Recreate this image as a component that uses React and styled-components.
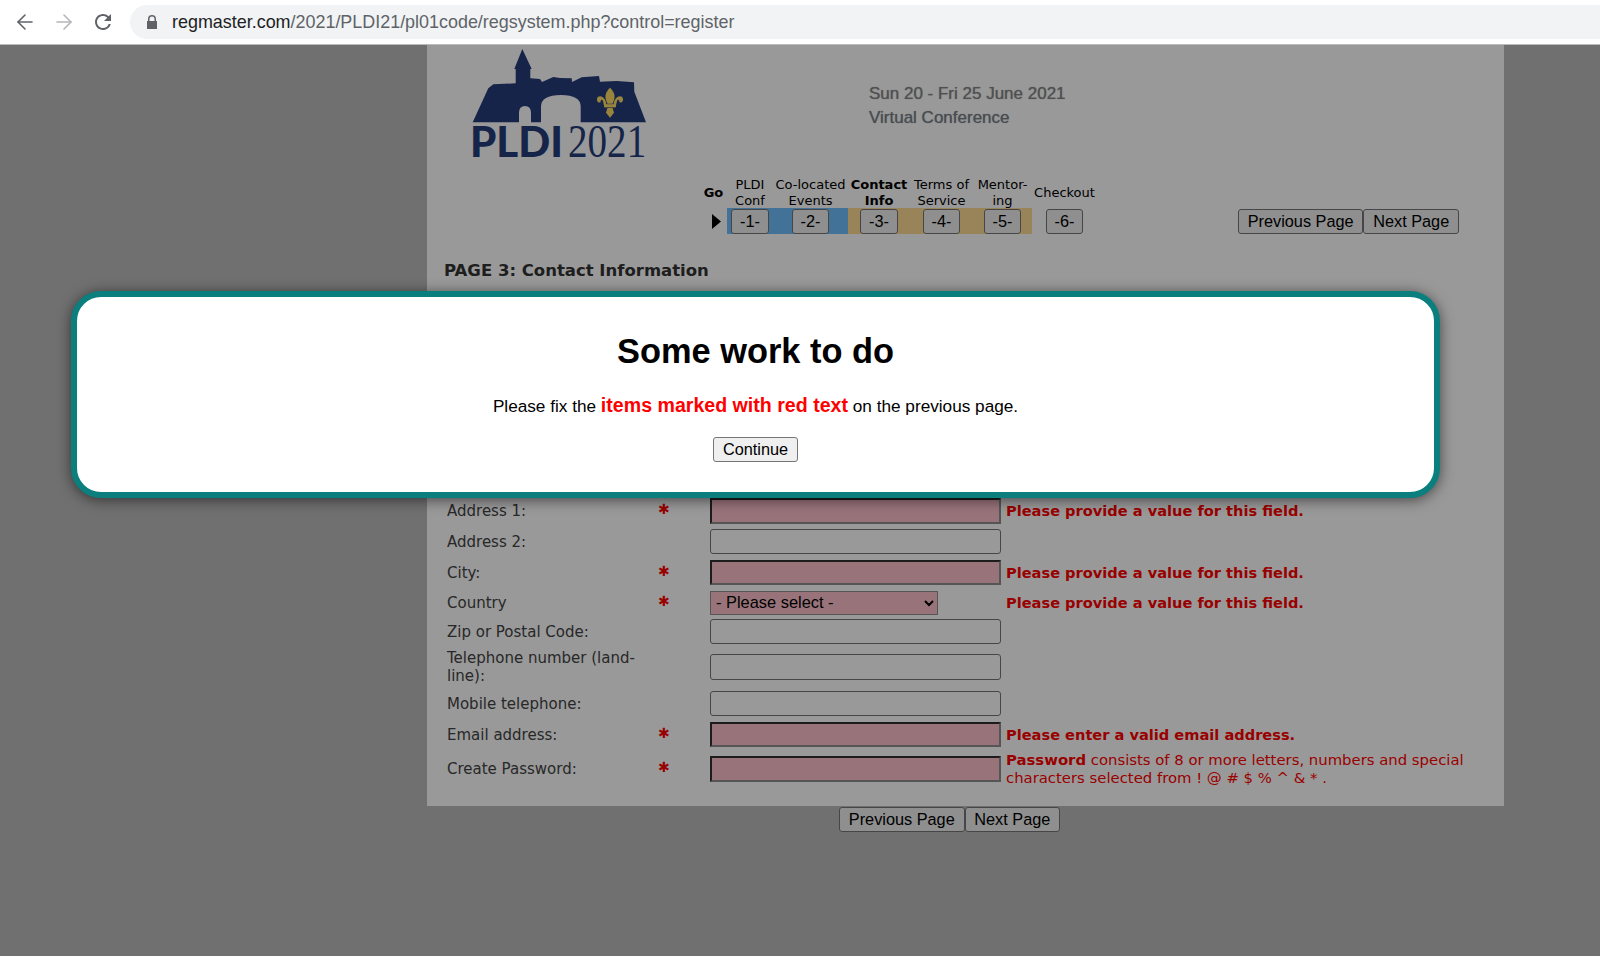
import React from 'react';
import styled, { createGlobalStyle } from 'styled-components';
import { ArrowLeft, ArrowRight } from 'lucide-react';

const GlobalStyle = createGlobalStyle`
  html, body {
    margin: 0;
    padding: 0;
    height: 100%;
    overflow: hidden;
    background: #bbbbbb;
  }
`;

const Browser = styled.div`
  display: flex;
  align-items: center;
  box-sizing: border-box;
  height: 45px;
  padding-bottom: 1px;
  background: #fff;
  border-bottom: 1px solid #bcbcbc;
  font-family: 'Liberation Sans', Arial, sans-serif;
`;

const NavIcon = styled.span`
  display: flex;
  align-items: center;
  justify-content: center;
  width: 24px;
  margin-left: ${(p) => p.$left}px;
  color: ${(p) => (p.$off ? '#b4b6b9' : '#5f6368')};
`;

const ReloadIcon = styled.svg`
  width: 24px;
  height: 24px;
  fill: currentColor;
`;

const UrlBar = styled.div`
  flex: 1;
  display: flex;
  align-items: center;
  height: 34px;
  margin-left: 15px;
  margin-right: -40px;
  padding-left: 16px;
  border-radius: 17px;
  background: #f1f3f4;
  font-size: 17.93px;
  color: #5f6368;
`;

const UrlText = styled.span`
  margin-top: 2px;
`;

const Host = styled.span`
  color: #202124;
`;

const LockIcon = styled.svg`
  width: 12px;
  height: 14px;
  margin-right: 14px;
  fill: #5f6368;
`;

const Content = styled.div`
  position: relative;
  height: 911px;
`;

const Overlay = styled.div`
  position: absolute;
  inset: 0;
  background: rgba(0, 0, 0, 0.4);
`;

const Panel = styled.main`
  width: 1077px;
  margin-left: 427px;
  padding-bottom: 19px;
  box-sizing: border-box;
  background: #fff;
  font-family: 'DejaVu Sans', Verdana, sans-serif;
  color: #444;
`;

const Masthead = styled.header`
  display: flex;
  height: 128px;
  padding: 4px 0 0 43px;
`;

const Logo = styled.div`
  display: flex;
  flex-direction: column;
  width: 178px;
  color: #263c7b;
`;

const LogoArt = styled.svg`
  display: block;
  width: 178px;
  height: 75px;
`;

const LogoText = styled.div`
  display: flex;
  align-items: baseline;
  justify-content: space-between;
  height: 35px;
  padding-right: 3px;
  line-height: 35px;
`;

const LogoPldi = styled.span`
  font-family: Lato, sans-serif;
  font-weight: 900;
  font-size: 42px;
`;

const LogoYear = styled.span`
  display: inline-block;
  width: 77px;
  font-family: 'Liberation Serif', serif;
  font-size: 46px;
  white-space: nowrap;
  transform: scaleX(0.85);
  transform-origin: left;
`;

const Dates = styled.div`
  margin: 33px 0 0 221px;
  font-family: 'Liberation Sans', Arial, sans-serif;
  font-size: 17px;
  line-height: 24px;
  color: #858585;
  text-shadow: 0 0 1px #999;
`;

const DateVenue = styled.span`
  color: #77808a;
`;

const StepsRow = styled.div`
  display: flex;
  align-items: flex-end;
  padding: 0 45px 0 273px;
`;

const Steps = styled.div`
  display: grid;
  grid-template-columns: 27px 46px 75px 62px 63px 59px 65px;
  grid-template-rows: 31px 26px;
  font-size: 13px;
  line-height: 16px;
  color: #000;
`;

const StepTitle = styled.div`
  display: flex;
  align-items: center;
  justify-content: center;
  text-align: center;
  white-space: nowrap;
  font-weight: ${(p) => (p.$bold ? 700 : 400)};
`;

const StepCell = styled.div`
  display: flex;
  align-items: center;
  justify-content: center;
  background: ${(p) => p.$color || 'transparent'};
`;

const CurrentMark = styled.svg`
  width: 9px;
  height: 15px;
  margin-left: 5px;
  fill: #000;
`;

const Button = styled.button`
  box-sizing: border-box;
  height: 25px;
  padding: 0 ${(p) => p.$pad ?? 8.8}px;
  border: 1px solid #767676;
  border-radius: 3px;
  background: #efefef;
  font-family: 'Liberation Sans', Arial, sans-serif;
  font-size: 16.3px;
  color: #000;
`;

const PageNav = styled.nav`
  display: flex;
  margin-left: auto;
`;

const PageTitle = styled.h2`
  margin: 27px 0 0 17px;
  font-size: 16.5px;
  line-height: 20px;
  font-weight: 700;
  color: #333;
`;

const Form = styled.form`
  margin-top: 217px;
  padding-left: 20px;
`;

const Row = styled.div`
  display: grid;
  grid-template-columns: 211px 52px 296px 470px;
  align-items: center;
  margin-bottom: ${(p) => p.$gap}px;
  min-height: 25px;
`;

const Label = styled.label`
  width: 200px;
  font-size: 15px;
  line-height: 18px;
`;

const Star = styled.span`
  height: 22px;
  font-size: 14px;
  line-height: 18px;
  font-weight: 700;
  color: #f00;
`;

const Field = styled.input`
  display: block;
  box-sizing: border-box;
  width: 291px;
  height: ${(p) => p.$h || 25}px;
  padding: 0 4px;
  background: #fff;
  border: 1px solid #767676;
  border-radius: 3px;
  ${(p) =>
    p.$bad &&
    `
    background: #ffc0cb;
    border-width: 2px;
    border-style: solid;
    border-color: #2f2f2f #8e8e8e #8e8e8e #2f2f2f;
    border-radius: 0;
  `}
`;

const Select = styled.select`
  display: block;
  box-sizing: border-box;
  width: 228px;
  height: 24px;
  padding: 0 0 2px 1px;
  background-color: #ffc0cb;
  border: 1px solid #8f8f8f;
  border-radius: 0;
  font-family: 'Liberation Sans', Arial, sans-serif;
  font-size: 16.4px;
  color: #000;
`;

const Message = styled.div`
  font-size: ${(p) => (p.$bold ? 14.6 : 14.85)}px;
  line-height: 18px;
  color: #f00;
  font-weight: ${(p) => (p.$bold ? 700 : 400)};
`;

const FooterNav = styled.nav`
  display: flex;
  margin: 1px 0 0 839px;
`;

const Modal = styled.section`
  position: absolute;
  left: 71px;
  top: 246px;
  box-sizing: border-box;
  width: 1369px;
  height: 207px;
  padding-top: 34px;
  display: flex;
  flex-direction: column;
  align-items: center;
  background: #fff;
  border: 6px solid #0a7f7d;
  border-radius: 30px;
  box-shadow: 0 2px 14px rgba(0, 0, 0, 0.55);
  font-family: 'Liberation Sans', Arial, sans-serif;
  color: #000;
`;

const ModalTitle = styled.h1`
  margin: 0;
  font-size: 34.4px;
  line-height: 40px;
  font-weight: 700;
`;

const ModalText = styled.p`
  margin: 23px 0 0;
  font-size: 17.2px;
  line-height: 22px;
`;

const RedText = styled.strong`
  font-size: 19.6px;
  color: #f00;
`;

const ModalButton = styled(Button)`
  margin-top: 20px;
`;

const rows = [
  { label: 'Address 1:', required: true, error: 'Please provide a value for this field.', gap: 5, h: 26 },
  { label: 'Address 2:', gap: 6 },
  { label: 'City:', required: true, error: 'Please provide a value for this field.', gap: 5 },
  { label: 'Country', required: true, error: 'Please provide a value for this field.', gap: 4, select: true },
  { label: 'Zip or Postal Code:', gap: 5 },
  { label: 'Telephone number (land-line):', gap: 6, h: 26 },
  { label: 'Mobile telephone:', gap: 6 },
  { label: 'Email address:', required: true, error: 'Please enter a valid email address.', gap: 4 },
];

const steps = [
  { title: ['PLDI', 'Conf'], n: '-1-', color: '#70bfff' },
  { title: ['Co-located', 'Events'], n: '-2-', color: '#70bfff' },
  { title: ['Contact', 'Info'], n: '-3-', color: '#ffdd94', bold: true },
  { title: ['Terms of', 'Service'], n: '-4-', color: '#ffdd94' },
  { title: ['Mentor-', 'ing'], n: '-5-', color: '#ffdd94' },
  { title: ['Checkout'], n: '-6-' },
];

function Fleur() {
  return (
    <g transform="translate(140 53.700)" fill="#ffdd66">
      <path d="M0-15C5-10 6-6 2.500 1L-2.500 1C-6-6-5-10 0-15Z" />
      <path d="M-3.500 2C-4-4-8-8-12-6C-14.500-3-12 1-9.500-.500C-9.500-2.500-8.500-3.500-7.500-2.500C-6-.500-7 4-3.500 5Z" />
      <path d="M3.500 2C4-4 8-8 12-6C14.500-3 12 1 9.500-.500C9.500-2.500 8.500-3.500 7.500-2.500C6-.500 7 4 3.500 5Z" />
      <rect x="-6" y="1.500" width="12" height="3" />
      <path d="M-2.500 5L2.500 5L4 10L0 15L-4 10Z" />
    </g>
  );
}

export default function App() {
  return (
    <>
      <GlobalStyle />
      <Browser>
        <NavIcon $left={13}><ArrowLeft size={24} strokeWidth={1.6} /></NavIcon>
        <NavIcon $left={15} $off><ArrowRight size={24} strokeWidth={1.6} /></NavIcon>
        <NavIcon $left={15}>
          <ReloadIcon viewBox="0 0 24 24">
            <path d="M17.650 6.350A7.958 7.958 0 0 0 12 4c-4.420 0-7.990 3.580-7.990 8s3.570 8 7.990 8c3.730 0 6.840-2.550 7.730-6h-2.080A5.990 5.990 0 0 1 12 18c-3.310 0-6-2.690-6-6s2.690-6 6-6c1.660 0 3.140.690 4.220 1.780L13 11h7V4l-2.350 2.350z" />
          </ReloadIcon>
        </NavIcon>
        <UrlBar>
          <LockIcon viewBox="0 0 12 14">
            <path d="M2 6V4a4 4 0 0 1 8 0v2h1v8H1V6Zm1.500 0h5V4a2.500 2.500 0 0 0-5 0Z" />
          </LockIcon>
          <UrlText><Host>regmaster.com</Host>/2021/PLDI21/pl01code/regsystem.php?control=register</UrlText>
        </UrlBar>
      </Browser>
      <Content>
        <Panel>
          <Masthead>
            <Logo>
              <LogoArt viewBox="0 0 178 75">
                <path
                  fillRule="evenodd"
                  fill="#263c7b"
                  d="M2.700 73.300L18.300 39.300L23.300 35.300L45.700 34.300L45.700 20L44.300 20L52.300 0L61.700 20L60.300 20L60.300 29.300L70 30L72 33L83.300 28L90 29L101.700 29.300L102 33L111.700 28.300L129 27L130 32.700L146.700 32L164 33.300L164.300 42.700L176 73.300ZM71 73.300L71 57.700Q71 46 91 46Q110.700 46 110.700 57.700L110.700 73.300ZM49 73.300L49 64Q49 57 55 57Q61 57 61 64L61 73.300Z"
                />
                <Fleur />
              </LogoArt>
              <LogoText>
                <LogoPldi>PLDI</LogoPldi>
                <LogoYear>2021</LogoYear>
              </LogoText>
            </Logo>
            <Dates>
              Sun 20 - Fri 25 June 2021
              <br />
              <DateVenue>Virtual Conference</DateVenue>
            </Dates>
          </Masthead>
          <StepsRow>
            <Steps>
              <StepTitle $bold>Go</StepTitle>
              {steps.map((s) => (
                <StepTitle key={s.n} $bold={s.bold}>
                  <span>
                    {s.title[0]}
                    {s.title[1] && <br />}
                    {s.title[1]}
                  </span>
                </StepTitle>
              ))}
              <StepCell>
                <CurrentMark viewBox="0 0 9 15"><path d="M0 0L9 7.500L0 15Z" /></CurrentMark>
              </StepCell>
              {steps.map((s) => (
                <StepCell key={s.n} $color={s.color}>
                  <Button type="button" $pad={8}>{s.n}</Button>
                </StepCell>
              ))}
            </Steps>
            <PageNav>
              <Button type="button">Previous Page</Button>
              <Button type="button">Next Page</Button>
            </PageNav>
          </StepsRow>
          <PageTitle>PAGE 3: Contact Information</PageTitle>
          <Form>
            {rows.map((r) => (
              <Row key={r.label} $gap={r.gap}>
                <Label>{r.label}</Label>
                <Star>{r.required ? '✱' : ''}</Star>
                {r.select ? (
                  <Select defaultValue="">
                    <option value="">- Please select -</option>
                  </Select>
                ) : (
                  <Field $bad={r.required} $h={r.h} />
                )}
                {r.error && <Message $bold>{r.error}</Message>}
              </Row>
            ))}
            <Row $gap={0}>
              <Label>Create Password:</Label>
              <Star>✱</Star>
              <Field $bad $h={26} />
              <Message>
                <strong>Password</strong> consists of 8 or more letters, numbers and special characters selected from ! @ # $ % ^ &amp; * .
              </Message>
            </Row>
          </Form>
        </Panel>
        <FooterNav>
          <Button type="button">Previous Page</Button>
          <Button type="button">Next Page</Button>
        </FooterNav>
        <Overlay />
        <Modal>
          <ModalTitle>Some work to do</ModalTitle>
          <ModalText>
            Please fix the <RedText>items marked with red text</RedText> on the previous page.
          </ModalText>
          <ModalButton type="button">Continue</ModalButton>
        </Modal>
      </Content>
    </>
  );
}
